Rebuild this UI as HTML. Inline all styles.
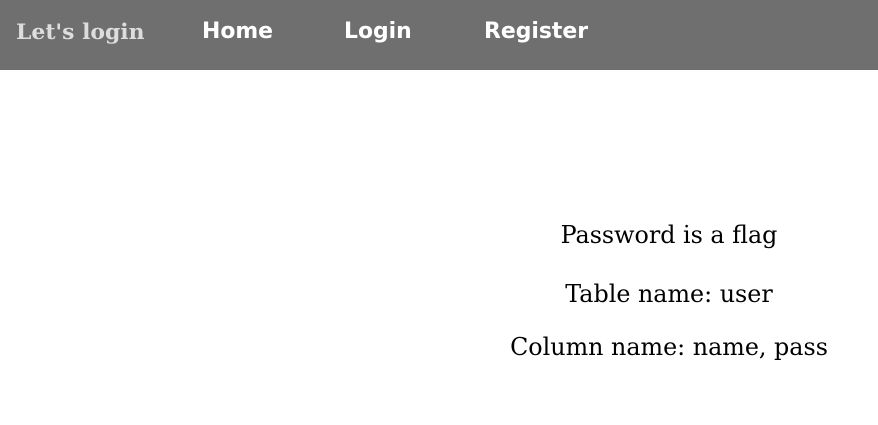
<!DOCTYPE html>
<html><head><style>
body{margin:0;width:878px;height:425px;background:#fff;position:relative;overflow:hidden}
.nav{position:absolute;left:0;top:0;width:878px;height:70px;background:#6f6f6f}
.nav span{position:absolute;top:17px;line-height:30px;font-size:21.9px;font-weight:bold;color:#fff;font-family:"DejaVu Sans",sans-serif;white-space:nowrap}
.nav .brand{font-family:"DejaVu Serif",serif;color:#ddd;left:16px}
.t{position:absolute;left:469px;width:400px;text-align:center;font-family:"DejaVu Serif",serif;font-size:23.8px;line-height:30px;color:#000;white-space:nowrap}
</style></head><body>
<div class="nav">
<span class="brand">Let's login</span>
<span style="left:202px">Home</span>
<span style="left:344px">Login</span>
<span style="left:484px">Register</span>
</div>
<div class="t" style="top:220px">Password is a flag</div>
<div class="t" style="top:279px">Table name: user</div>
<div class="t" style="top:332px">Column name: name, pass</div>
</body></html>
